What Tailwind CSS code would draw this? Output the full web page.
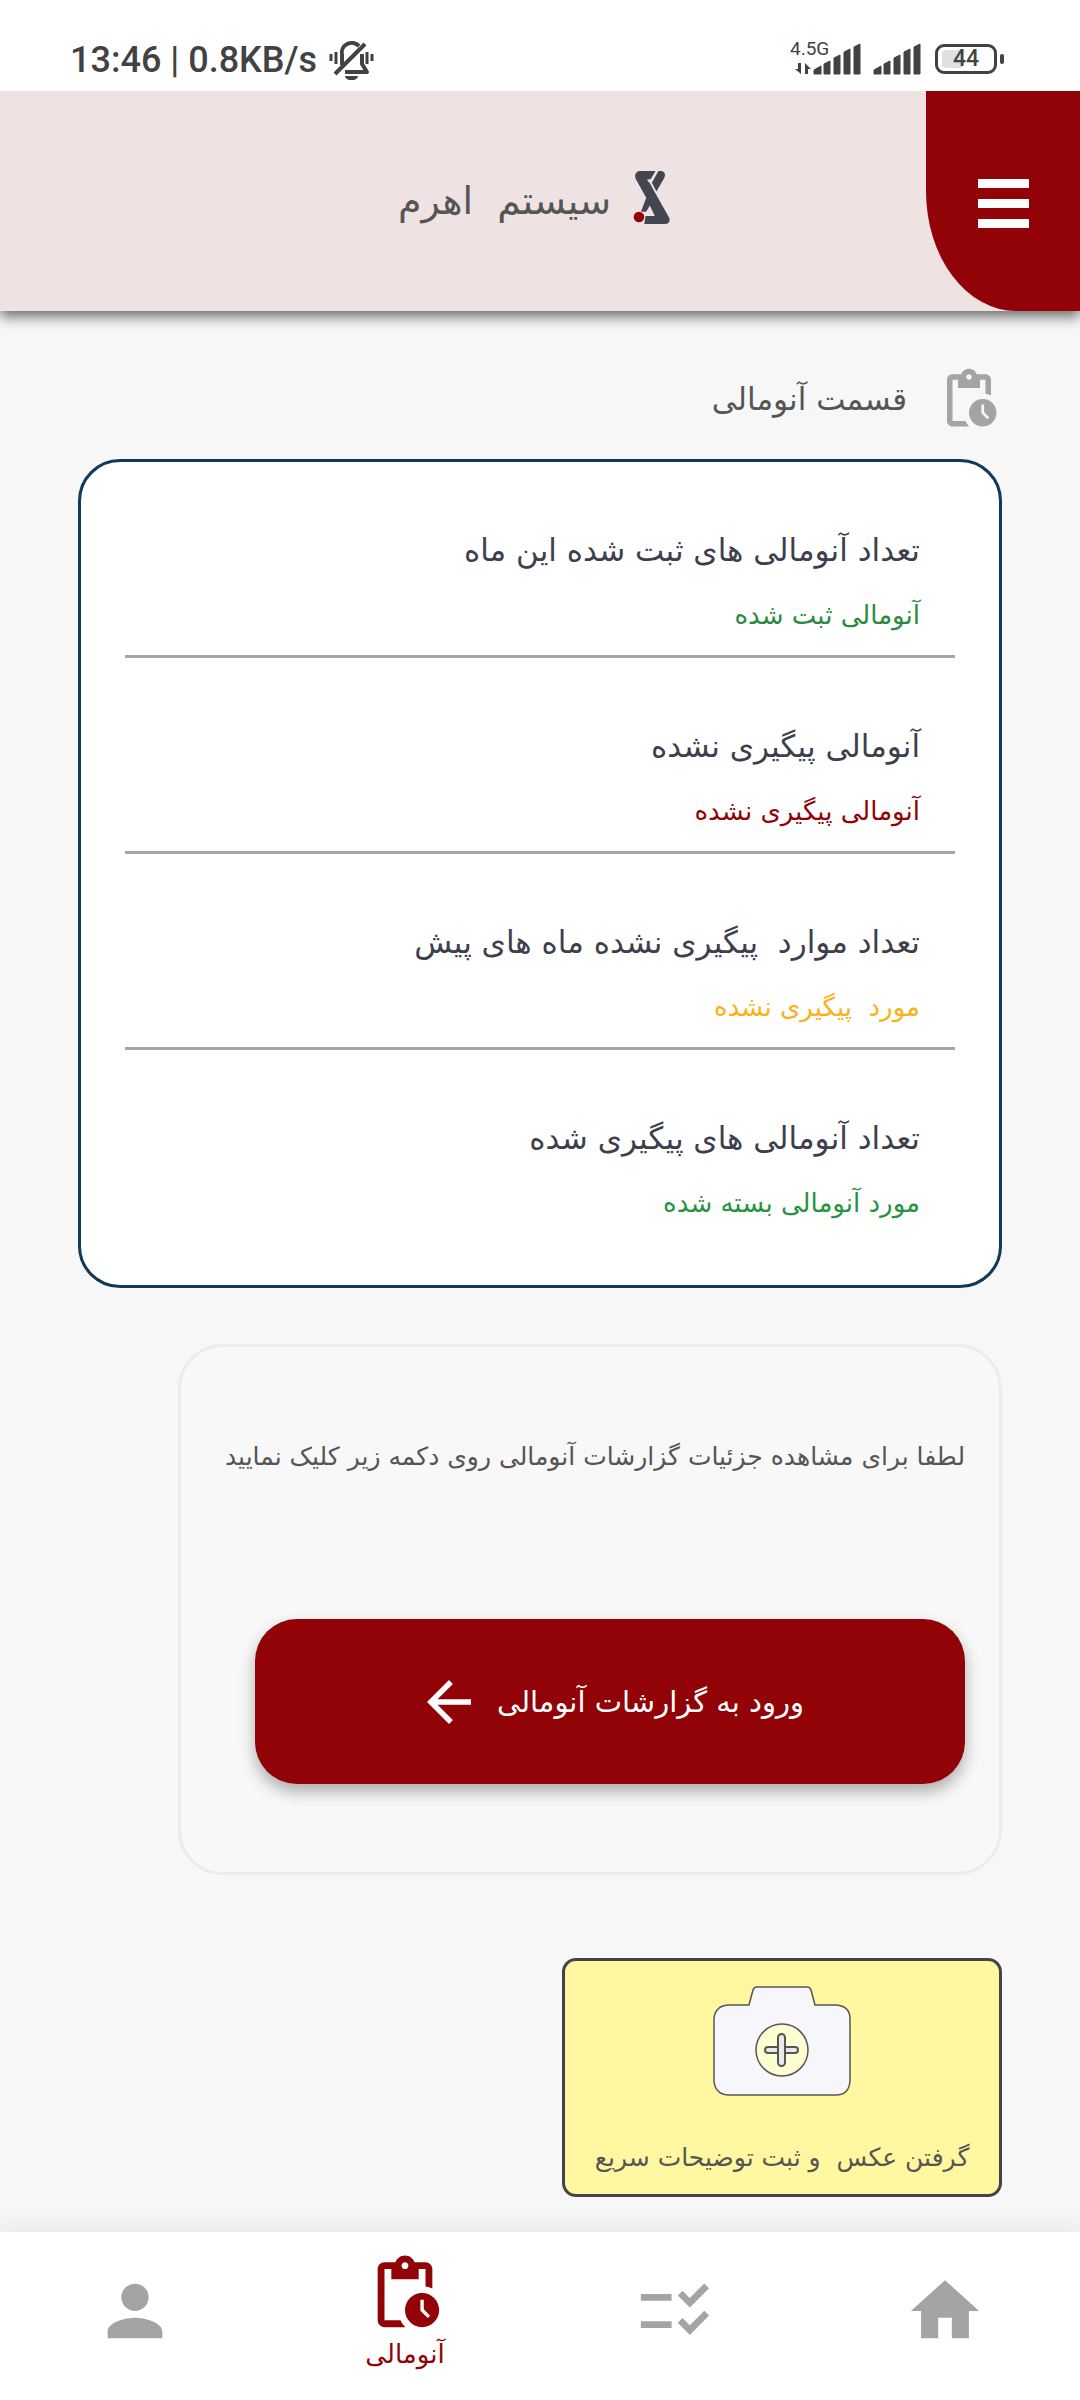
<!DOCTYPE html>
<html lang="fa" dir="rtl">
<head>
<meta charset="utf-8">
<meta name="viewport" content="width=device-width, initial-scale=1">
<title>سیستم اهرم</title>
<script src="https://cdn.jsdelivr.net/npm/@tailwindcss/browser@4"></script>
</head>
<body class="flex min-h-screen flex-col bg-[#f7f7f7] font-['DejaVu_Sans',sans-serif] text-[#555555]">

<div dir="ltr" class="relative z-10 flex h-[91px] shrink-0 items-start justify-between bg-white pt-[38px] pr-[76px] pl-[70px] font-[Roboto,sans-serif] text-[#424242]">
  <div class="flex items-center gap-3">
    <span class="text-[36px] leading-[44px] font-medium whitespace-nowrap">13:46 | 0.8KB/s</span>
    <svg class="h-10 w-[46px]" viewBox="0 0 46 40" fill="none" stroke="#424242" stroke-width="4">
      <path d="M36 4 6 34"/>
      <path d="M13 25V15a10 10 0 0 1 17-9"/>
      <path d="M33 14v10l5 8H16" stroke-linejoin="round"/>
      <path d="M16 36h13a6 4 0 0 1-13 0z" fill="#424242" stroke="none"/>
      <path d="M2 14v7M7 12v12M38 12v12M43 14v7" stroke-width="3"/>
    </svg>
  </div>
  <div class="flex items-start">
    <div class="relative h-10 w-[72px]">
      <span class="absolute top-0 left-0 text-[19px] leading-[22px]">4.5G</span>
      <svg class="h-10 w-[72px]" viewBox="0 0 72 40" fill="#424242">
        <path d="M8 25h3v11l-6-5h3zM15 36V25l6 6h-3v5z"/>
        <path d="M24 32l7-4v8h-7zM34 26l6-3v13h-6zM44 20l6-3v19h-6zM54 14l6-3v25h-6zM64 9l6-3v30h-6z" stroke="#424242" stroke-width="1" stroke-linejoin="round"/>
      </svg>
    </div>
    <svg class="ml-[11px] h-10 w-12" viewBox="0 0 48 40" fill="#424242" stroke="#424242" stroke-width="1" stroke-linejoin="round">
      <path d="M1 32l7-4v8H1zM11 26l6-3v13h-6zM21 20l6-3v19h-6zM31 14l6-3v25h-6zM41 9l6-3v30h-6z"/>
    </svg>
    <div class="ml-[14px] flex h-9 items-end gap-[3px]">
      <div class="relative flex h-[30px] w-[62px] items-center justify-center rounded-[9px] border-[3px] border-[#424242] text-[23px] leading-[24px] font-medium">
        <span class="absolute top-[3px] left-1 h-[18px] w-5 rounded-l-sm bg-[#e0e0e0]"></span>
        <span class="relative">44</span>
      </div>
      <span class="mb-[10px] h-[10px] w-1 rounded-sm bg-[#424242]"></span>
    </div>
  </div>
</div>

<header class="relative flex h-[220px] shrink-0 bg-[#eee2e3] shadow-[0_6px_12px_rgba(0,0,0,0.55)]">
  <button type="button" aria-label="منو" class="flex w-[154px] flex-col items-center justify-center gap-[11px] rounded-bl-[90px_120px] bg-[#910306] pt-1">
    <span class="h-[9px] w-[51px] bg-white"></span>
    <span class="h-[9px] w-[51px] bg-white"></span>
    <span class="h-[9px] w-[51px] bg-white"></span>
  </button>
  <div class="flex flex-1 items-center justify-center gap-[22px]">
    <svg class="mb-[7px] h-[55px] w-[37px]" viewBox="780 120 112 164">
      <path d="M798 122h50l-14 24-12 2 10 12 14 26 44 78q4 18-14 18h-62l4-24h28l-15-32-11 19h-16l16-42-32-58q-6-17 10-23z" fill="#424650"/>
      <path d="M857 122h10q14 4 8 20l-24 42-14-27z" fill="#424650"/>
      <circle cx="798" cy="261" r="16" fill="#910306"/>
    </svg>
    <h1 class="text-[38px] leading-[48px] whitespace-pre">سیستم  اهرم</h1>
  </div>
  <div class="w-[142px]"></div>
</header>

<main class="flex flex-1 flex-col items-start px-[78px] pt-[55px]">
  <div class="flex items-center gap-[29px]">
    <svg class="size-[66px]" viewBox="0 0 24 24" fill="#a3a4a6"><path d="M17 12c-2.76 0-5 2.24-5 5s2.24 5 5 5 5-2.24 5-5-2.24-5-5-5zm1.65 7.35L16.5 17.2V14h1v2.79l1.85 1.85-.7.71zM18 3h-3.18C14.4 1.84 13.3 1 12 1s-2.4.84-2.82 2H6c-1.1 0-2 .9-2 2v15c0 1.1.9 2 2 2h6.11c-.59-.57-1.07-1.25-1.42-2H6V5h2v3h8V5h2v5.08c.71.1 1.38.31 2 .6V5c0-1.1-.9-2-2-2zm-6 2c-.55 0-1-.45-1-1s.45-1 1-1 1 .45 1 1-.45 1-1 1z"/></svg>
    <h2 class="text-[31px] leading-10">قسمت آنومالی</h2>
  </div>

  <ul class="mt-[27px] w-full rounded-[42px] border-[3px] border-[#103a5a] bg-white px-11 pb-[62px]">
    <li class="border-b-[3px] border-[#a5a5a5] px-[35px] pt-[68px] pb-5">
      <p class="text-[31px] leading-10 whitespace-pre text-[#3d3f4c]">تعداد آنومالی های ثبت شده این ماه</p>
      <p class="mt-[25px] text-[26px] leading-10 whitespace-pre text-[#2a8a40]">آنومالی ثبت شده</p>
    </li>
    <li class="border-b-[3px] border-[#a5a5a5] px-[35px] pt-[68px] pb-5">
      <p class="text-[31px] leading-10 whitespace-pre text-[#3d3f4c]">آنومالی پیگیری نشده</p>
      <p class="mt-[25px] text-[26px] leading-10 whitespace-pre text-[#910306]">آنومالی پیگیری نشده</p>
    </li>
    <li class="border-b-[3px] border-[#a5a5a5] px-[35px] pt-[68px] pb-5">
      <p class="text-[31px] leading-10 whitespace-pre text-[#3d3f4c]">تعداد موارد  پیگیری نشده ماه های پیش</p>
      <p class="mt-[25px] text-[26px] leading-10 whitespace-pre text-[#fbb117]">مورد  پیگیری نشده</p>
    </li>
    <li class="px-[35px] pt-[68px]">
      <p class="text-[31px] leading-10 whitespace-pre text-[#3d3f4c]">تعداد آنومالی های پیگیری شده</p>
      <p class="mt-[25px] text-[26px] leading-10 whitespace-pre text-[#27923f]">مورد آنومالی بسته شده</p>
    </li>
  </ul>

  <section class="mt-14 flex w-[824px] max-w-full flex-col items-start rounded-[45px] border-[3px] border-[#ececec] bg-[#f8f8f8] px-[34px] pt-[90px] pb-[88px]">
    <p class="text-[25px] leading-10 whitespace-nowrap">لطفا برای مشاهده جزئیات گزارشات آنومالی روی دکمه زیر کلیک نمایید</p>
    <button type="button" class="mt-[142px] flex h-[165px] w-[710px] max-w-full items-center justify-center gap-[15px] rounded-[42px] bg-[#910306] text-white shadow-[0_8px_16px_rgba(0,0,0,0.3)]">
      <span class="text-[29px] leading-10">ورود به گزارشات آنومالی</span>
      <svg class="size-[66px]" viewBox="0 0 24 24" fill="currentColor"><path d="M20 11H7.83l5.59-5.59L12 4l-8 8 8 8 1.41-1.41L7.83 13H20v-2z"/></svg>
    </button>
  </section>

  <button type="button" class="mt-[83px] flex h-[239px] w-[440px] flex-col items-center rounded-[14px] border-[3px] border-[#444444] bg-[#fff8a1] pt-[25px]">
    <svg class="h-[110px] w-[138px]" viewBox="0 0 138 110" fill="#f7f6fa" stroke="#555555" stroke-width="1.5">
      <path d="M15 19H36L40 4q1-3 4-3H94q3 0 4 3l4 15h21q14 1 14 14V95q-1 14-14 14H15Q2 108 1 95V33Q2 20 15 19z"/>
      <circle cx="69" cy="64" r="26" fill="#feffd0"/>
      <g stroke-width="2" fill="#e9e9ea"><rect x="52" y="61" width="33" height="6" rx="3"/><rect x="65" y="48" width="7" height="32" rx="3.5"/></g>
    </svg>
    <span class="mt-[42px] text-[25px] leading-10 whitespace-pre">گرفتن عکس  و ثبت توضیحات سریع</span>
  </button>
</main>

<nav class="mt-[35px] grid h-[168px] grid-cols-4 bg-white shadow-[0_-4px_24px_rgba(0,0,0,0.08)]">
  <a href="#home" aria-label="خانه" class="flex flex-col items-center pt-[38px]">
    <svg class="size-[82px]" viewBox="0 0 24 24" fill="#a3a4a6"><path d="M10 20v-6h4v6h5v-8h3L12 3 2 12h3v8z"/></svg>
  </a>
  <a href="#tasks" aria-label="فهرست" class="flex flex-col items-center pt-[38px]">
    <svg class="size-[82px]" viewBox="0 0 24 24" fill="#a3a4a6"><path d="M11 7H2v2h9zM11 15H2v2h9zM16.34 11l-3.54-3.54 1.41-1.41 2.12 2.12 4.24-4.24 1.41 1.41zM16.34 19l-3.54-3.54 1.41-1.41 2.12 2.12 4.24-4.24 1.41 1.41z"/></svg>
  </a>
  <a href="#anomaly" aria-current="page" class="flex flex-col items-center pt-5 text-[#910306]">
    <svg class="size-[82px]" viewBox="0 0 24 24" fill="currentColor"><path d="M17 12c-2.76 0-5 2.24-5 5s2.24 5 5 5 5-2.24 5-5-2.24-5-5-5zm1.65 7.35L16.5 17.2V14h1v2.79l1.85 1.85-.7.71zM18 3h-3.18C14.4 1.84 13.3 1 12 1s-2.4.84-2.82 2H6c-1.1 0-2 .9-2 2v15c0 1.1.9 2 2 2h6.11c-.59-.57-1.07-1.25-1.42-2H6V5h2v3h8V5h2v5.08c.71.1 1.38.31 2 .6V5c0-1.1-.9-2-2-2zm-6 2c-.55 0-1-.45-1-1s.45-1 1-1 1 .45 1 1-.45 1-1 1z"/></svg>
    <span class="text-[26px] leading-10">آنومالی</span>
  </a>
  <a href="#profile" aria-label="پروفایل" class="flex flex-col items-center pt-[38px]">
    <svg class="size-[82px]" viewBox="0 0 24 24" fill="#a3a4a6"><path d="M12 12c2.21 0 4-1.79 4-4s-1.79-4-4-4-4 1.79-4 4 1.79 4 4 4zm0 2c-2.67 0-8 1.34-8 4v2h16v-2c0-2.66-5.33-4-8-4z"/></svg>
  </a>
</nav>
</body>
</html>
